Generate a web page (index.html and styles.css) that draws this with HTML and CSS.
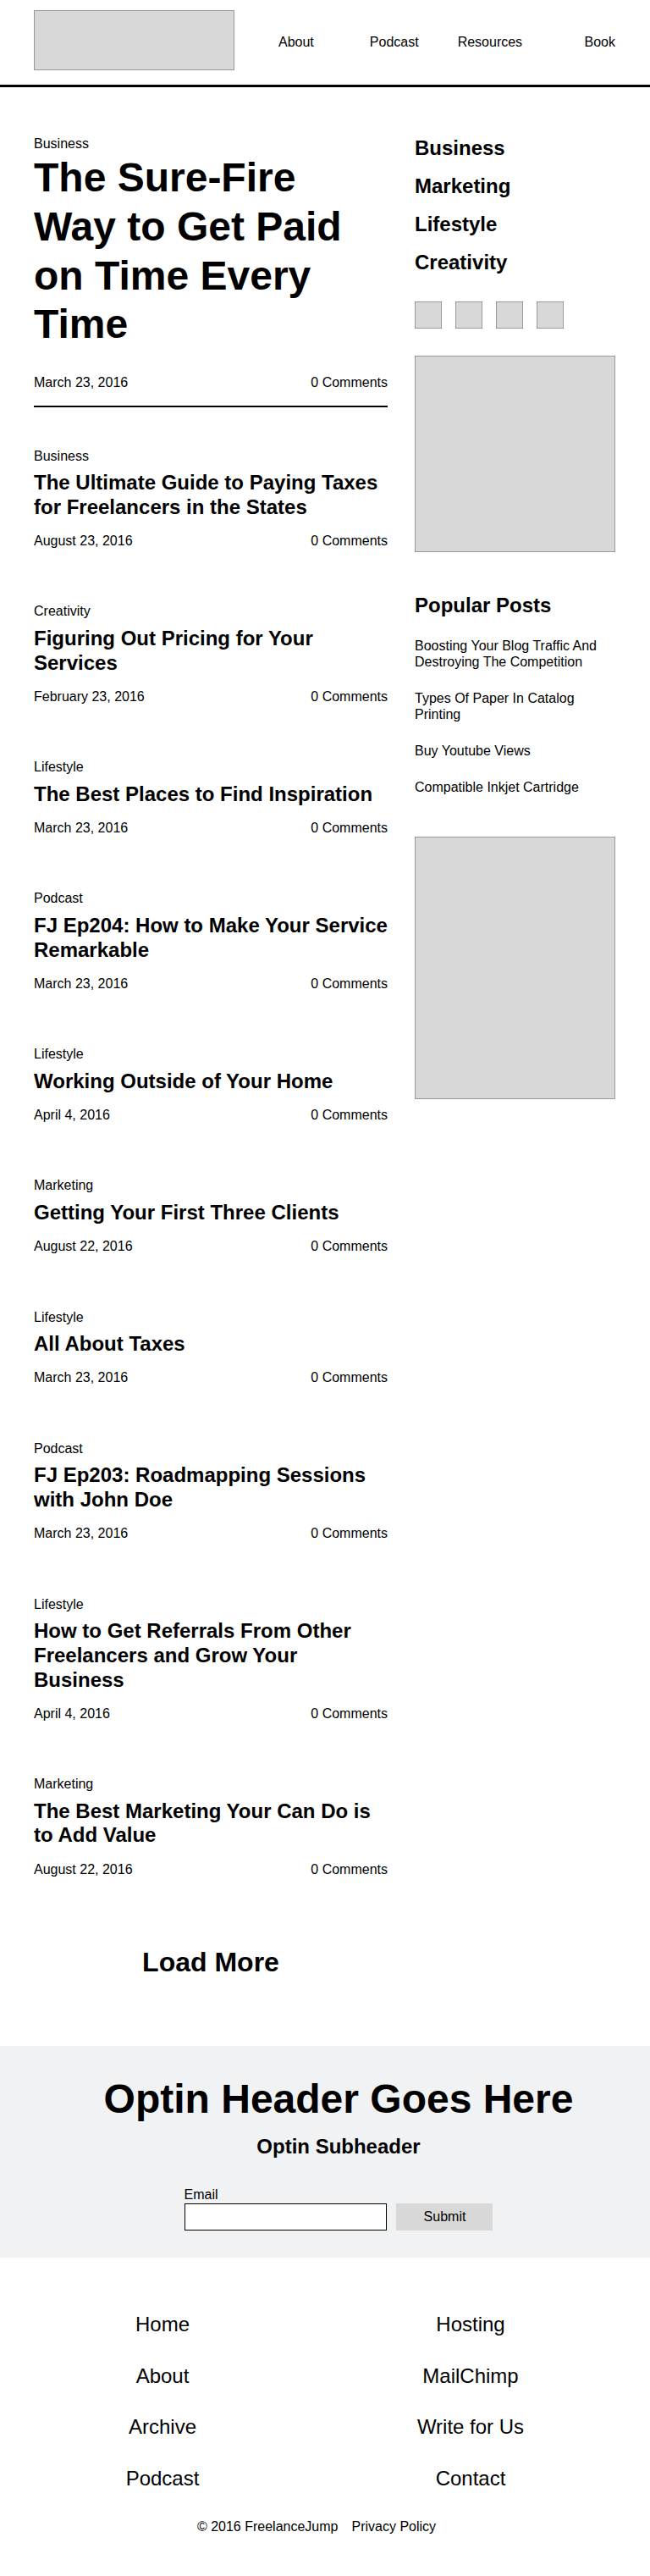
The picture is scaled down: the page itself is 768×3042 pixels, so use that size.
FILE: index.html
```html
<!DOCTYPE html>
<html lang="en">
<head>
<meta charset="utf-8">
<title>FreelanceJump</title>
<link rel="stylesheet" href="styles.css">
</head>
<body>
<header class="site-header">
  <div class="logo"></div>
  <nav class="main-nav">
    <a class="nav-item nav-about" href="#">About</a>
    <a class="nav-item nav-podcast" href="#">Podcast</a>
    <a class="nav-item nav-resources" href="#">Resources</a>
    <a class="nav-item nav-book" href="#">Book</a>
  </nav>
</header>

<div class="layout">
  <main class="content">
    <article class="hero">
      <div class="category">Business</div>
      <h1 class="hero-title">The Sure-Fire Way to Get Paid on Time Every Time</h1>
      <div class="meta hero-meta"><span>March 23, 2016</span><span>0 Comments</span></div>
    </article>

    <section class="posts">
      <article class="post">
        <div class="category">Business</div>
        <h2 class="post-title">The Ultimate Guide to Paying Taxes for Freelancers in the States</h2>
        <div class="meta"><span>August 23, 2016</span><span>0 Comments</span></div>
      </article>
      <article class="post">
        <div class="category">Creativity</div>
        <h2 class="post-title">Figuring Out Pricing for Your Services</h2>
        <div class="meta"><span>February 23, 2016</span><span>0 Comments</span></div>
      </article>
      <article class="post">
        <div class="category">Lifestyle</div>
        <h2 class="post-title">The Best Places to Find Inspiration</h2>
        <div class="meta"><span>March 23, 2016</span><span>0 Comments</span></div>
      </article>
      <article class="post">
        <div class="category">Podcast</div>
        <h2 class="post-title">FJ Ep204: How to Make Your Service Remarkable</h2>
        <div class="meta"><span>March 23, 2016</span><span>0 Comments</span></div>
      </article>
      <article class="post">
        <div class="category">Lifestyle</div>
        <h2 class="post-title">Working Outside of Your Home</h2>
        <div class="meta"><span>April 4, 2016</span><span>0 Comments</span></div>
      </article>
      <article class="post">
        <div class="category">Marketing</div>
        <h2 class="post-title">Getting Your First Three Clients</h2>
        <div class="meta"><span>August 22, 2016</span><span>0 Comments</span></div>
      </article>
      <article class="post">
        <div class="category">Lifestyle</div>
        <h2 class="post-title">All About Taxes</h2>
        <div class="meta"><span>March 23, 2016</span><span>0 Comments</span></div>
      </article>
      <article class="post">
        <div class="category">Podcast</div>
        <h2 class="post-title">FJ Ep203: Roadmapping Sessions with John Doe</h2>
        <div class="meta"><span>March 23, 2016</span><span>0 Comments</span></div>
      </article>
      <article class="post">
        <div class="category">Lifestyle</div>
        <h2 class="post-title">How to Get Referrals From Other Freelancers and Grow Your Business</h2>
        <div class="meta"><span>April 4, 2016</span><span>0 Comments</span></div>
      </article>
      <article class="post">
        <div class="category">Marketing</div>
        <h2 class="post-title">The Best Marketing Your Can Do is to Add Value</h2>
        <div class="meta"><span>August 22, 2016</span><span>0 Comments</span></div>
      </article>
    </section>

    <div class="load-more">Load More</div>
  </main>

  <aside class="sidebar">
    <ul class="cat-list">
      <li>Business</li>
      <li>Marketing</li>
      <li>Lifestyle</li>
      <li>Creativity</li>
    </ul>
    <div class="social">
      <span class="social-icon"></span>
      <span class="social-icon"></span>
      <span class="social-icon"></span>
      <span class="social-icon"></span>
    </div>
    <div class="placeholder ad-square"></div>
    <h2 class="popular-title">Popular Posts</h2>
    <ul class="popular-list">
      <li>Boosting Your Blog Traffic And Destroying The Competition</li>
      <li>Types Of Paper In Catalog Printing</li>
      <li>Buy Youtube Views</li>
      <li>Compatible Inkjet Cartridge</li>
    </ul>
    <div class="placeholder ad-tall"></div>
  </aside>
</div>

<section class="optin">
  <h2 class="optin-title">Optin Header Goes Here</h2>
  <h3 class="optin-sub">Optin Subheader</h3>
  <form class="optin-form">
    <label class="email-label" for="email">Email</label>
    <div class="form-row">
      <input class="email-input" id="email" type="text">
      <button class="submit-btn" type="button">Submit</button>
    </div>
  </form>
</section>

<footer class="site-footer">
  <div class="footer-links">
    <a href="#">Home</a>
    <a href="#">Hosting</a>
    <a href="#">About</a>
    <a href="#">MailChimp</a>
    <a href="#">Archive</a>
    <a href="#">Write for Us</a>
    <a href="#">Podcast</a>
    <a href="#">Contact</a>
  </div>
  <div class="copyright">
    <span>© 2016 FreelanceJump</span>
    <a href="#">Privacy Policy</a>
  </div>
</footer>
</body>
</html>
```

FILE: styles.css
```css
* {
  box-sizing: border-box;
}

body {
  margin: 0;
  font-family: "Liberation Sans", Arial, Helvetica, sans-serif;
  color: #000;
  background: #fff;
}

a {
  color: inherit;
  text-decoration: none;
}

/* Header */
.site-header {
  display: flex;
  align-items: flex-start;
  height: 103px;
  padding: 12px 41px 0 40px;
  border-bottom: 3px solid #000;
}

.logo {
  flex: none;
  width: 237px;
  height: 71px;
  background: #d8d8d8;
  border: 1px solid #999;
}

.main-nav {
  flex: 1;
  display: flex;
  margin-top: 29px;
  font-size: 16px;
  line-height: 18px;
}

.nav-about { margin-left: 52px; }
.nav-podcast { margin-left: 66px; }
.nav-resources { margin-left: 46px; }
.nav-book { margin-left: auto; }

/* Layout */
.layout {
  display: flex;
  align-items: flex-start;
  gap: 32px;
  padding: 58px 41px 0 40px;
}

.content {
  flex: none;
  width: 418px;
  display: flex;
  flex-direction: column;
}

.sidebar {
  flex: none;
  width: 237px;
  display: flex;
  flex-direction: column;
}

/* Posts */
.category {
  font-size: 16px;
  line-height: 18px;
}

.hero {
  padding-bottom: 17.5px;
  border-bottom: 2px solid #000;
}

.hero-title {
  margin: 2.4px 0 0;
  font-size: 48px;
  line-height: 57.6px;
  font-weight: 700;
}

.meta {
  display: flex;
  justify-content: space-between;
  font-size: 16px;
  line-height: 18px;
}

.hero-meta {
  margin-top: 31.5px;
}

.posts {
  margin-top: 48.8px;
  display: flex;
  flex-direction: column;
}

.post {
  padding-bottom: 65.3px;
}

.post-title {
  margin: 8.5px 0 0;
  font-size: 24px;
  line-height: 28.8px;
  font-weight: 700;
}

.post .meta {
  margin-top: 16.5px;
}

.load-more {
  margin-top: 16px;
  padding-bottom: 79.6px;
  text-align: center;
  font-size: 32px;
  line-height: 38.4px;
  font-weight: 700;
}

/* Sidebar */
.cat-list {
  list-style: none;
  margin: 0;
  padding: 0;
  display: flex;
  flex-direction: column;
  gap: 16.1px;
  font-size: 24px;
  line-height: 28.8px;
  font-weight: 700;
}

.social {
  display: flex;
  gap: 16px;
  margin-top: 32px;
}

.social-icon {
  width: 32px;
  height: 32px;
  background: #d8d8d8;
  border: 1px solid #999;
}

.placeholder {
  width: 237px;
  background: #d8d8d8;
  border: 1px solid #999;
}

.ad-square {
  height: 232px;
  margin-top: 32px;
}

.popular-title {
  margin: 48.5px 0 0;
  font-size: 24px;
  line-height: 28.8px;
  font-weight: 700;
}

.popular-list {
  list-style: none;
  margin: 23px 0 0;
  padding: 0;
  display: flex;
  flex-direction: column;
  gap: 23.7px;
  font-size: 16px;
  line-height: 19.2px;
}

.ad-tall {
  height: 310px;
  margin-top: 49px;
}

/* Optin */
.optin {
  background: #f1f2f4;
  padding: 33.6px 0 32px 32px;
  text-align: center;
}

.optin-title {
  margin: 0;
  font-size: 48px;
  line-height: 57.6px;
  font-weight: 700;
}

.optin-sub {
  margin: 14px 0 0;
  font-size: 24px;
  line-height: 28.8px;
  font-weight: 700;
}

.optin-form {
  width: 365px;
  margin: 33px auto 0;
  text-align: left;
}

.email-label {
  display: block;
  font-size: 16px;
  line-height: 18px;
}

.form-row {
  display: flex;
  gap: 11.6px;
  margin-top: 1px;
}

.email-input {
  width: 239.4px;
  height: 32px;
  margin: 0;
  padding: 0 6px;
  border: 1px solid #000;
  background: #fff;
  font: 16px "Liberation Sans", Arial, sans-serif;
}

.submit-btn {
  width: 114px;
  height: 32px;
  margin: 0;
  padding: 0;
  border: none;
  background: #d8d8d8;
  color: #000;
  font: 16px "Liberation Sans", Arial, sans-serif;
}

/* Footer */
.site-footer {
  padding: 64.6px 30px 49.5px 10px;
}

.footer-links {
  display: grid;
  grid-template-columns: 364px 364px;
  row-gap: 32.1px;
  text-align: center;
  font-size: 24px;
  line-height: 28.8px;
}

.copyright {
  display: flex;
  justify-content: center;
  gap: 16px;
  margin-top: 32.4px;
  font-size: 16px;
  line-height: 18px;
}
```
